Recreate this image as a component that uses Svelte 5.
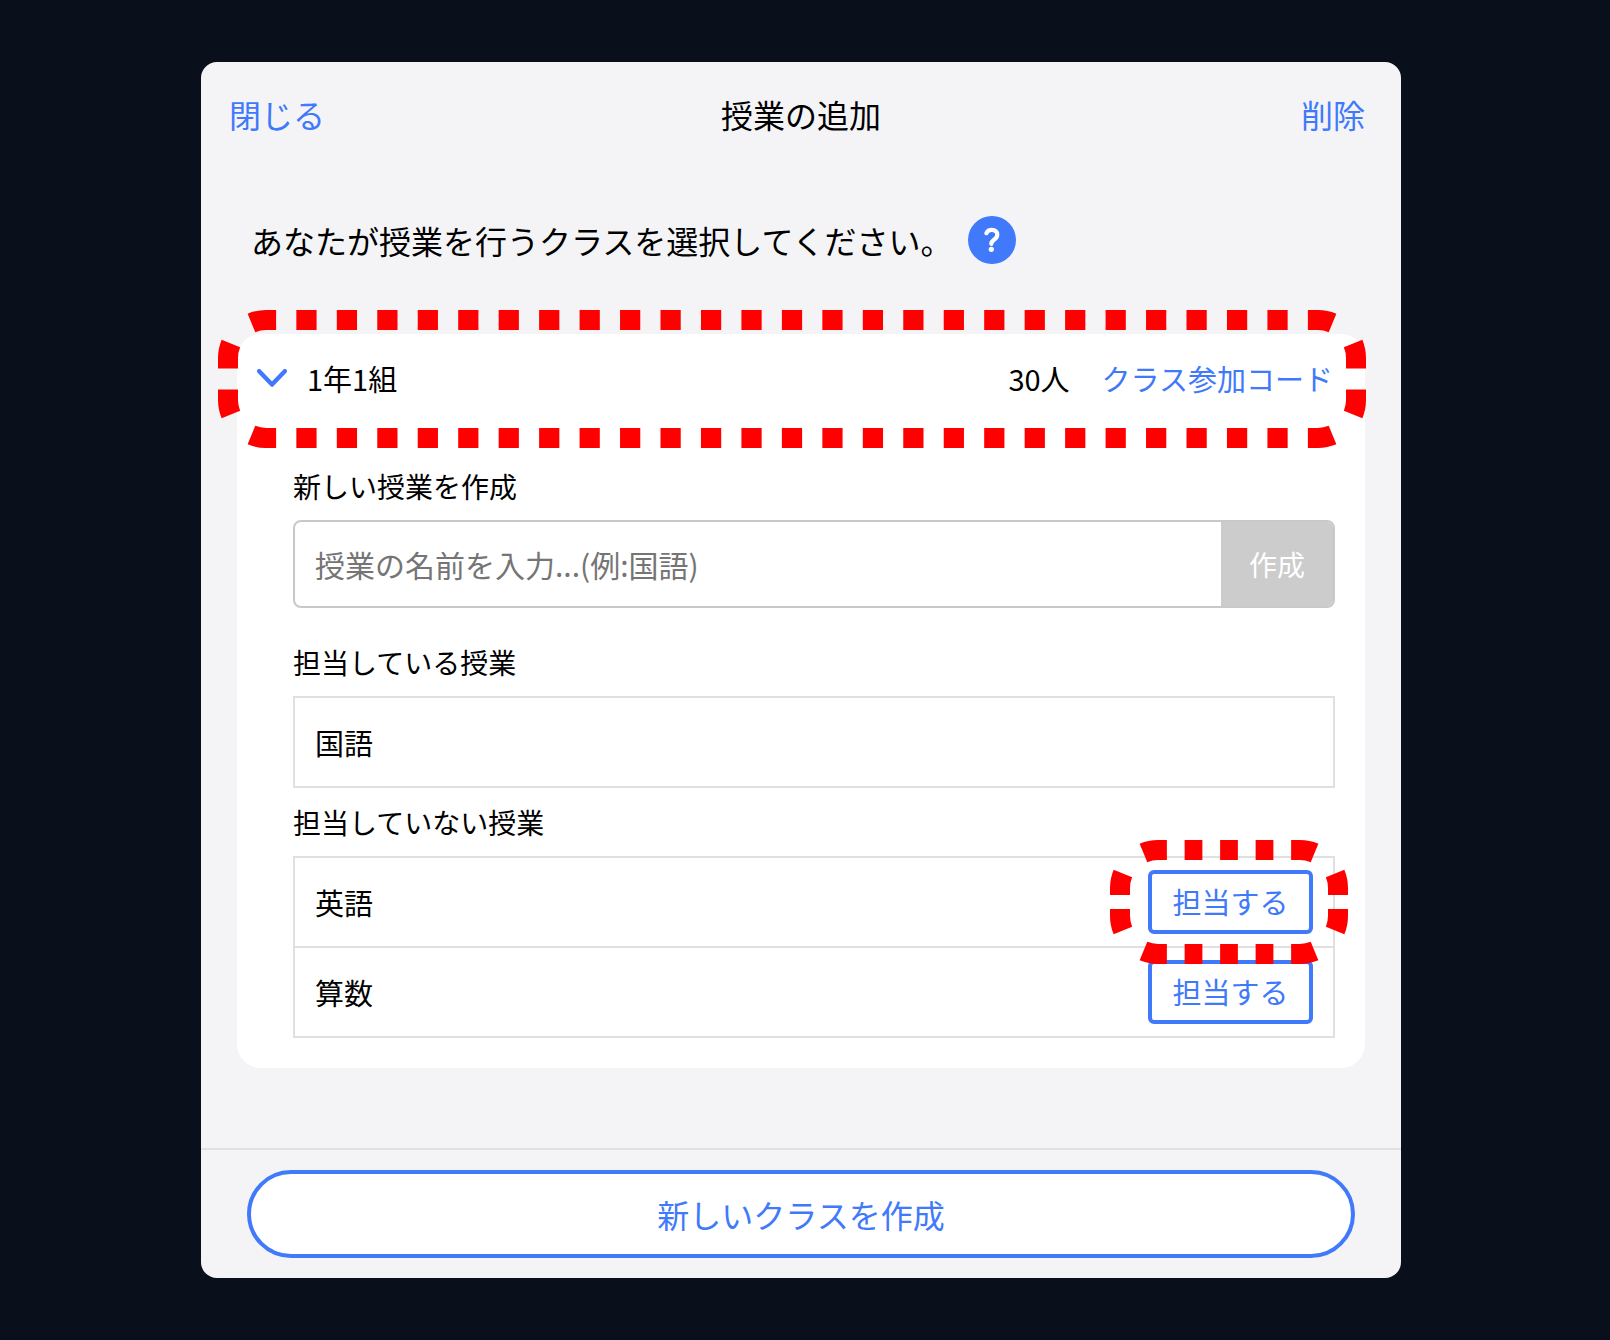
<script lang="ts">
    const className = '1年1組';
    const memberCount = 30;
    const ownLessons = ['国語'];
    const otherLessons = [
        { name: '英語', marked: true },
        { name: '算数', marked: false },
    ];

    const STROKE = 20;
    const RADIUS = 48;
    const STEP = 40;

    let newLesson = $state('');
    let open = $state(true);
    let headSize = $state({ w: 0, h: 0 });
    let joinSize = $state({ w: 0, h: 0 });

    // Straight edges start and end on half a dash, corners carry a gap in the middle
    function framePaths(w: number, h: number) {
        const a = STROKE / 2;
        const r = RADIUS - a;
        const [x1, x2, y1, y2] = [RADIUS, w - RADIUS, RADIUS, h - RADIUS];
        const nx = Math.max(1, Math.round((x2 - x1) / STEP));
        const ny = Math.max(1, Math.round((y2 - y1) / STEP));
        return {
            edges: [
                { d: `M${x1} ${a}H${x2}`, n: nx },
                { d: `M${x1} ${h - a}H${x2}`, n: nx },
                { d: `M${a} ${y1}V${y2}`, n: ny },
                { d: `M${w - a} ${y1}V${y2}`, n: ny },
            ],
            corners: [
                `M${a} ${y1}A${r} ${r} 0 0 1 ${x1} ${a}`,
                `M${x2} ${a}A${r} ${r} 0 0 1 ${w - a} ${y1}`,
                `M${w - a} ${y2}A${r} ${r} 0 0 1 ${x2} ${h - a}`,
                `M${x1} ${h - a}A${r} ${r} 0 0 1 ${a} ${y2}`,
            ],
        };
    }
</script>

{#snippet frame(w: number, h: number)}
    {#if w > 0}
        {@const f = framePaths(w, h)}
        <svg width={w} height={h} fill="none" stroke="#f00" stroke-width={STROKE}>
            {#each f.edges as e}
                <path d={e.d} pathLength={e.n * 2} stroke-dasharray="1 1" stroke-dashoffset="0.5" />
            {/each}
            {#each f.corners as d}
                <path {d} pathLength="4" stroke-dasharray="1 2" />
            {/each}
        </svg>
    {/if}
{/snippet}

<div class="backdrop">
    <main class="modal">
        <header class="top">
            <button class="link">閉じる</button>
            <h1>授業の追加</h1>
            <button class="link end">削除</button>
        </header>

        <div class="content">
            <div class="lead">
                <p>あなたが授業を行うクラスを選択してください。</p>
                <button class="help" aria-label="ヘルプ">
                    <svg viewBox="0 0 48 48" width="48" height="48" fill="none">
                        <path d="M18.4 17.2C19.2 15 21.2 13.9 23.7 13.9C27 13.9 29.3 15.8 29.3 18.7C29.3 21 28.1 22.2 26.3 23.5C24.4 24.9 23.4 25.7 23.3 27.8" stroke="#fff" stroke-width="4.2" stroke-linecap="round" />
                        <circle cx="23.3" cy="33.3" r="2.6" fill="#fff" />
                    </svg>
                </button>
            </div>

            <section class="card">
                <div class="card-head">
                    <button class="toggle" aria-expanded={open} onclick={() => (open = !open)}>
                        <svg viewBox="0 0 30 18" width="30" height="18" fill="none" class:closed={!open}>
                            <path d="M2.2 2.2L15 15.6L27.8 2.2" stroke="currentColor" stroke-width="4.4" stroke-linecap="round" stroke-linejoin="round" />
                        </svg>
                        <span>{className}</span>
                    </button>
                    <span class="count">{memberCount}人</span>
                    <button class="code">クラス参加コード</button>
                    <div class="mark mark-head" bind:clientWidth={headSize.w} bind:clientHeight={headSize.h}>
                        {@render frame(headSize.w, headSize.h)}
                    </div>
                </div>

                {#if open}
                    <div class="card-body">
                        <label class="caption" for="new-lesson">新しい授業を作成</label>
                        <form class="field" onsubmit={(e) => e.preventDefault()}>
                            <input id="new-lesson" type="text" placeholder="授業の名前を入力...(例:国語)" bind:value={newLesson} />
                            <button disabled={!newLesson}>作成</button>
                        </form>

                        <h2 class="caption wide">担当している授業</h2>
                        <ul>
                            {#each ownLessons as name}
                                <li>{name}</li>
                            {/each}
                        </ul>

                        <h2 class="caption">担当していない授業</h2>
                        <ul>
                            {#each otherLessons as lesson}
                                <li>
                                    {lesson.name}
                                    <div class="join-wrap">
                                        <button class="join">担当する</button>
                                        {#if lesson.marked}
                                            <div class="mark mark-join" bind:clientWidth={joinSize.w} bind:clientHeight={joinSize.h}>
                                                {@render frame(joinSize.w, joinSize.h)}
                                            </div>
                                        {/if}
                                    </div>
                                </li>
                            {/each}
                        </ul>
                    </div>
                {/if}
            </section>
        </div>

        <footer>
            <button class="create">新しいクラスを作成</button>
        </footer>
    </main>
</div>

<style>
    :global(body) { background: #09101c; }
    .backdrop { --blue: #4079fa; --line: #e0e0e0; box-sizing: border-box; padding: 62px 8px 62px 0; font-family: "Noto Sans CJK JP", sans-serif; font-size: 29px; line-height: 40px; color: #000; }
    .backdrop :global(*) { box-sizing: border-box; }
    button { padding: 0; border: 0; background: none; font: inherit; color: var(--blue); cursor: pointer; }
    h1, h2, p, ul { margin: 0; padding: 0; font-weight: 400; }
    svg { display: block; }

    .modal { max-width: 1200px; margin: 0 auto; background: #f4f4f7; border-radius: 16px; }
    .top { display: grid; grid-template-columns: 1fr auto 1fr; align-items: center; height: 104px; padding: 0 28px; font-size: 32px; }
    h1 { font-size: 32px; }
    .link { justify-self: start; }
    .link.end { justify-self: end; margin-right: 8px; }

    .content { padding: 50px 36px 80px; }
    .lead { display: flex; align-items: center; gap: 16px; margin-bottom: 70px; padding-left: 14px; font-size: 32px; }
    .help { width: 48px; height: 48px; border-radius: 50%; background: var(--blue); }

    .card { background: #fff; border-radius: 24px; }
    .card-head { position: relative; display: flex; align-items: center; height: 90px; padding: 0 32px 2px 20px; }
    .toggle { display: flex; flex: 1; align-items: center; gap: 20px; }
    .toggle span { color: #000; }
    .closed { transform: rotate(-90deg); }
    .count { margin-right: 32px; }

    .card-body { padding: 42px 30px 30px 56px; }
    .caption { display: block; margin: 14px 0; font-size: 28px; }
    .caption:first-child { margin-top: 0; }
    .caption.wide { margin-top: 34px; }
    .field { display: flex; height: 88px; border: 2px solid #c8c7cc; border-radius: 8px; background: #fff; overflow: hidden; }
    .field input { flex: 1; min-width: 0; padding: 0 20px; border: 0; outline: 0; background: none; font: inherit; font-size: 30px; color: inherit; }
    .field input::placeholder { color: #757575; }
    .field button { width: 112px; font-size: 28px; background: var(--blue); color: #fff; }
    .field button:disabled { background: #ccc; cursor: default; }

    ul { list-style: none; border: 2px solid var(--line); }
    li { display: flex; align-items: center; justify-content: space-between; height: 88px; padding: 0 20px; }
    li + li { height: 90px; border-top: 2px solid var(--line); }
    .join-wrap { position: relative; }
    .join { display: block; width: 165px; height: 64px; padding-bottom: 2px; border: 4px solid var(--blue); border-radius: 6px; background: #fff; }

    .mark { position: absolute; z-index: 1; pointer-events: none; }
    .mark-head { inset: -24px -1px -24px -19px; }
    .mark-join { inset: -30px -35px -30px -38px; }

    footer { padding: 20px 46px; border-top: 2px solid var(--line); }
    .create { width: 100%; height: 88px; border: 4px solid var(--blue); border-radius: 44px; background: #fff; font-size: 32px; }
</style>
